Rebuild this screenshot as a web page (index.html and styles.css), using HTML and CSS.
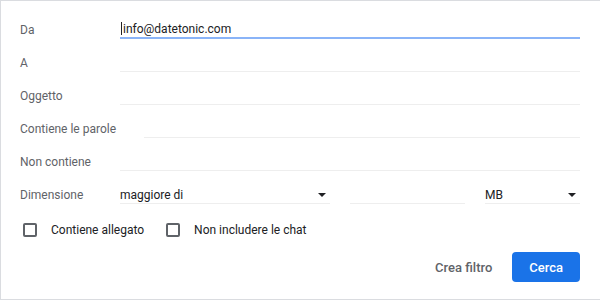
FILE: index.html
```html
<!DOCTYPE html>
<html lang="it">
  <head>
    <meta charset="UTF-8" />
    <meta name="viewport" content="width=device-width, initial-scale=1.0" />
    <title>Ricerca avanzata</title>
    <link rel="stylesheet" href="styles.css">
  </head>
  <body>
    <div class="search-panel">
      <div class="field-row">
        <label class="field-label">Da</label>
        <div class="field-input is-focused"><span class="caret"></span>info@datetonic.com</div>
      </div>
      <div class="field-row">
        <label class="field-label">A</label>
        <div class="field-input"></div>
      </div>
      <div class="field-row">
        <label class="field-label">Oggetto</label>
        <div class="field-input"></div>
      </div>
      <div class="field-row">
        <label class="field-label">Contiene le parole</label>
        <div class="field-input"></div>
      </div>
      <div class="field-row">
        <label class="field-label">Non contiene</label>
        <div class="field-input"></div>
      </div>
      <div class="field-row">
        <label class="field-label">Dimensione</label>
        <div class="size-group">
          <div class="field-input field-select size-compare">
            <span>maggiore di</span>
            <span class="select-arrow"></span>
          </div>
          <div class="field-input size-value"></div>
          <div class="field-input field-select size-unit">
            <span>MB</span>
            <span class="select-arrow"></span>
          </div>
        </div>
      </div>

      <div class="check-row">
        <label class="check-item">
          <span class="check-box"></span>
          Contiene allegato
        </label>
        <label class="check-item">
          <span class="check-box"></span>
          Non includere le chat
        </label>
      </div>

      <div class="actions">
        <button class="btn btn-flat">Crea filtro</button>
        <button class="btn btn-primary">Cerca</button>
      </div>
    </div>
  </body>
</html>
```

FILE: styles.css
```css
:root {
  --text: #202124;
  --muted: #5f6368;
  --line: #eeeeee;
  --frame: #dadce0;
  --focus: #8ab4f8;
  --primary: #1a73e8;
}

* {
  box-sizing: border-box;
  margin: 0;
  padding: 0;
}

body {
  font-family: Roboto, "Liberation Sans", sans-serif;
  font-size: 12px;
  color: var(--text);
  background: #fff;
}

.search-panel {
  border: 1px solid var(--frame);
  border-right: 0;
  padding: 5px 20px 17px 19px;
}

.field-row {
  display: flex;
  align-items: flex-end;
  height: 33px;
}

.field-label {
  flex: 0 0 auto;
  min-width: 100px;
  padding-right: 28px;
  line-height: 14px;
  margin-bottom: 2px;
  color: var(--muted);
}

.field-input {
  flex: 1;
  height: 22px;
  padding-top: 6px;
  line-height: 14px;
  border-bottom: 1px solid var(--line);
  color: var(--text);
}

.field-input.is-focused {
  border-bottom: 2px solid var(--focus);
  height: 23px;
  padding-left: 1px;
}

.caret {
  display: inline-block;
  width: 1px;
  height: 13px;
  margin-right: 1px;
  vertical-align: -2px;
  background: var(--text);
}

.size-group {
  flex: 1;
  display: flex;
  gap: 20px;
}

.field-select {
  display: flex;
  justify-content: space-between;
}

.select-arrow {
  width: 0;
  height: 0;
  margin: 5px 4px 0 0;
  border-left: 4px solid transparent;
  border-right: 4px solid transparent;
  border-top: 4px solid var(--text);
}

.size-compare {
  flex: 0 0 210px;
}

.size-value {
  flex: 0 0 115px;
}

.size-unit {
  flex: 1;
}

.check-row {
  display: flex;
  align-items: center;
  gap: 22px;
  height: 20px;
  margin-top: 16px;
  padding-left: 3px;
}

.check-item {
  display: flex;
  align-items: center;
  gap: 14px;
  color: var(--text);
}

.check-box {
  width: 14px;
  height: 14px;
  border: 2px solid var(--muted);
  border-radius: 2px;
}

.actions {
  display: flex;
  justify-content: flex-end;
  align-items: center;
  gap: 3px;
  margin-top: 12px;
}

.btn {
  font-family: inherit;
  font-size: 13px;
  font-weight: 500;
  height: 30px;
  padding: 0 17px;
  border: 0;
  border-radius: 4px;
  background: none;
  cursor: pointer;
}

.btn-flat {
  color: var(--muted);
}

.btn-primary {
  background: var(--primary);
  color: #fff;
}
```
